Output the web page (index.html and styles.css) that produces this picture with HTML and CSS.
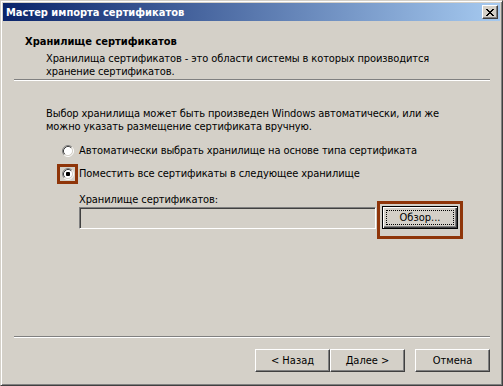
FILE: index.html
```html
<!DOCTYPE html>
<html lang="ru">
<head>
  <meta charset="UTF-8">
  <title>Мастер импорта сертификатов</title>
  <link rel="stylesheet" href="styles.css">
</head>
<body>
  <div class="window">
    <!-- Title bar -->
    <div class="titlebar">
      <span class="title">Мастер импорта сертификатов</span>
      <span class="close">
        <svg width="8" height="7" viewBox="0 0 8 7"><path d="M0 0h2v1h1v1h2v-1h1v-1h2v1h-1v1h-1v1h-1v1h1v1h1v1h1v1h-2v-1h-1v-1h-2v1h-1v1h-2v-1h1v-1h1v-1h1v-1h-1v-1h-1v-1h-1z" fill="#000"/></svg>
      </span>
    </div>

    <!-- Page header -->
    <div class="header">
      <div class="head-title">Хранилище сертификатов</div>
      <div class="head-sub">Хранилища сертификатов - это области системы в которых производится<br>хранение сертификатов.</div>
    </div>
    <div class="etched"></div>

    <!-- Page content -->
    <div class="content">
      <p class="intro">Выбор хранилища может быть произведен Windows автоматически, или же<br>можно указать размещение сертификата вручную.</p>

      <label class="option first">
        <span class="radio">
          <svg width="12" height="12" viewBox="0 0 12 12">
            <circle cx="6" cy="6" r="4.5" fill="#fff"/>
            <path d="M2.11 9.89A5.5 5.5 0 0 1 9.89 2.11" stroke="#808080" fill="none"/>
            <path d="M9.89 2.11A5.5 5.5 0 0 1 2.11 9.89" stroke="#fff" fill="none"/>
            <path d="M2.82 9.18A4.5 4.5 0 0 1 9.18 2.82" stroke="#404040" fill="none"/>
            <path d="M9.18 2.82A4.5 4.5 0 0 1 2.82 9.18" stroke="#d4d0c8" fill="none"/>
          </svg>
        </span>
        Автоматически выбрать хранилище на основе типа сертификата
      </label>

      <label class="option">
        <span class="radio">
          <svg width="12" height="12" viewBox="0 0 12 12">
            <circle cx="6" cy="6" r="4.5" fill="#fff"/>
            <path d="M2.11 9.89A5.5 5.5 0 0 1 9.89 2.11" stroke="#808080" fill="none"/>
            <path d="M9.89 2.11A5.5 5.5 0 0 1 2.11 9.89" stroke="#fff" fill="none"/>
            <path d="M2.82 9.18A4.5 4.5 0 0 1 9.18 2.82" stroke="#404040" fill="none"/>
            <path d="M9.18 2.82A4.5 4.5 0 0 1 2.82 9.18" stroke="#d4d0c8" fill="none"/>
            <rect x="4" y="4" width="4" height="4" rx="1" fill="#000"/>
          </svg>
          <span class="mark mark-radio"></span>
        </span>
        Поместить все сертификаты в следующее хранилище
      </label>

      <div class="store">
        <div class="store-label">Хранилище сертификатов:</div>
        <div class="store-row">
          <div class="field"></div>
          <div class="browse">
            <button class="btn default"><span class="focus">Обзор...</span></button>
            <span class="mark mark-browse"></span>
          </div>
        </div>
      </div>
    </div>

    <!-- Wizard buttons -->
    <div class="etched"></div>
    <div class="buttons">
      <button class="btn">&lt; Назад</button>
      <button class="btn">Далее &gt;</button>
      <button class="btn cancel">Отмена</button>
    </div>
  </div>
</body>
</html>
```

FILE: styles.css
```css
* {
  box-sizing: border-box;
}
body {
  margin: 0;
  background: #d4d0c8;
  font-family: "DejaVu Sans Condensed", "DejaVu Sans", sans-serif;
  font-size: 11px;
  color: #000;
}
.window {
  width: 503px;
  height: 386px;
  display: flex;
  flex-direction: column;
  padding: 2px;
  background: #d4d0c8;
  border: 1px solid;
  border-color: #d4d0c8 #404040 #404040 #d4d0c8;
  box-shadow: inset 1px 1px #fff, inset -1px -1px #808080;
}
.titlebar {
  height: 18px;
  display: flex;
  align-items: center;
  justify-content: space-between;
  padding: 0 2px 0 3px;
  background: linear-gradient(to right, #0a246a, #a6caf0);
  color: #fff;
  font-weight: bold;
}
.close {
  width: 16px;
  height: 14px;
  display: flex;
  align-items: center;
  justify-content: center;
  background: #d4d0c8;
  border: 1px solid;
  border-color: #fff #404040 #404040 #fff;
  box-shadow: inset -1px -1px #808080;
}
.header {
  padding: 14px 0 1px 22px;
  line-height: 13px;
}
.head-title {
  font-weight: bold;
  margin-bottom: 4px;
}
.head-sub {
  padding-left: 21px;
  letter-spacing: -0.1px;
}
.etched {
  height: 2px;
  margin: 0 10px 0 11px;
  border-top: 1px solid #808080;
  border-bottom: 1px solid #fff;
}
.content {
  flex: 1;
  padding: 26px 0 0 43px;
  line-height: 13px;
  letter-spacing: -0.1px;
}
.intro {
  margin: 0;
}
.option {
  display: flex;
  align-items: center;
  gap: 5px;
  height: 13px;
  margin: 10px 0 0 16px;
}
.option.first {
  margin-top: 11px;
}
.radio {
  position: relative;
  width: 12px;
  height: 12px;
}
.radio svg {
  display: block;
}
.mark {
  position: absolute;
  border: 3px solid #8f3509;
}
.mark-radio {
  left: -5px;
  top: -4px;
  width: 21px;
  height: 20px;
}
.store {
  padding-left: 33px;
  margin-top: 13px;
}
.store-row {
  display: flex;
  align-items: flex-start;
  gap: 6px;
}
.field {
  width: 297px;
  height: 22px;
  margin-top: 1px;
  background: #d4d0c8;
  border: 1px solid;
  border-color: #808080 #fff #fff #808080;
  box-shadow: inset 1px 1px #404040, inset -1px -1px #d4d0c8;
}
.browse {
  position: relative;
}
.mark-browse {
  left: -5px;
  top: -5px;
  width: 86px;
  height: 38px;
}
.btn {
  width: 75px;
  height: 23px;
  padding: 0;
  font: inherit;
  color: #000;
  background: #d4d0c8;
  border: 1px solid;
  border-color: #fff #404040 #404040 #fff;
  box-shadow: inset -1px -1px #808080;
}
.btn.default {
  width: 76px;
  display: flex;
  padding: 3px;
  border: 1px solid #000;
  box-shadow: inset 1px 1px #fff, inset -1px -1px #404040, inset -2px -2px #808080;
}
.focus {
  flex: 1;
  display: flex;
  align-items: center;
  justify-content: center;
  border: 1px dotted #000;
}
.buttons {
  display: flex;
  justify-content: flex-end;
  padding: 11px 10px 11px 0;
}
.cancel {
  margin-left: 10px;
}
```
